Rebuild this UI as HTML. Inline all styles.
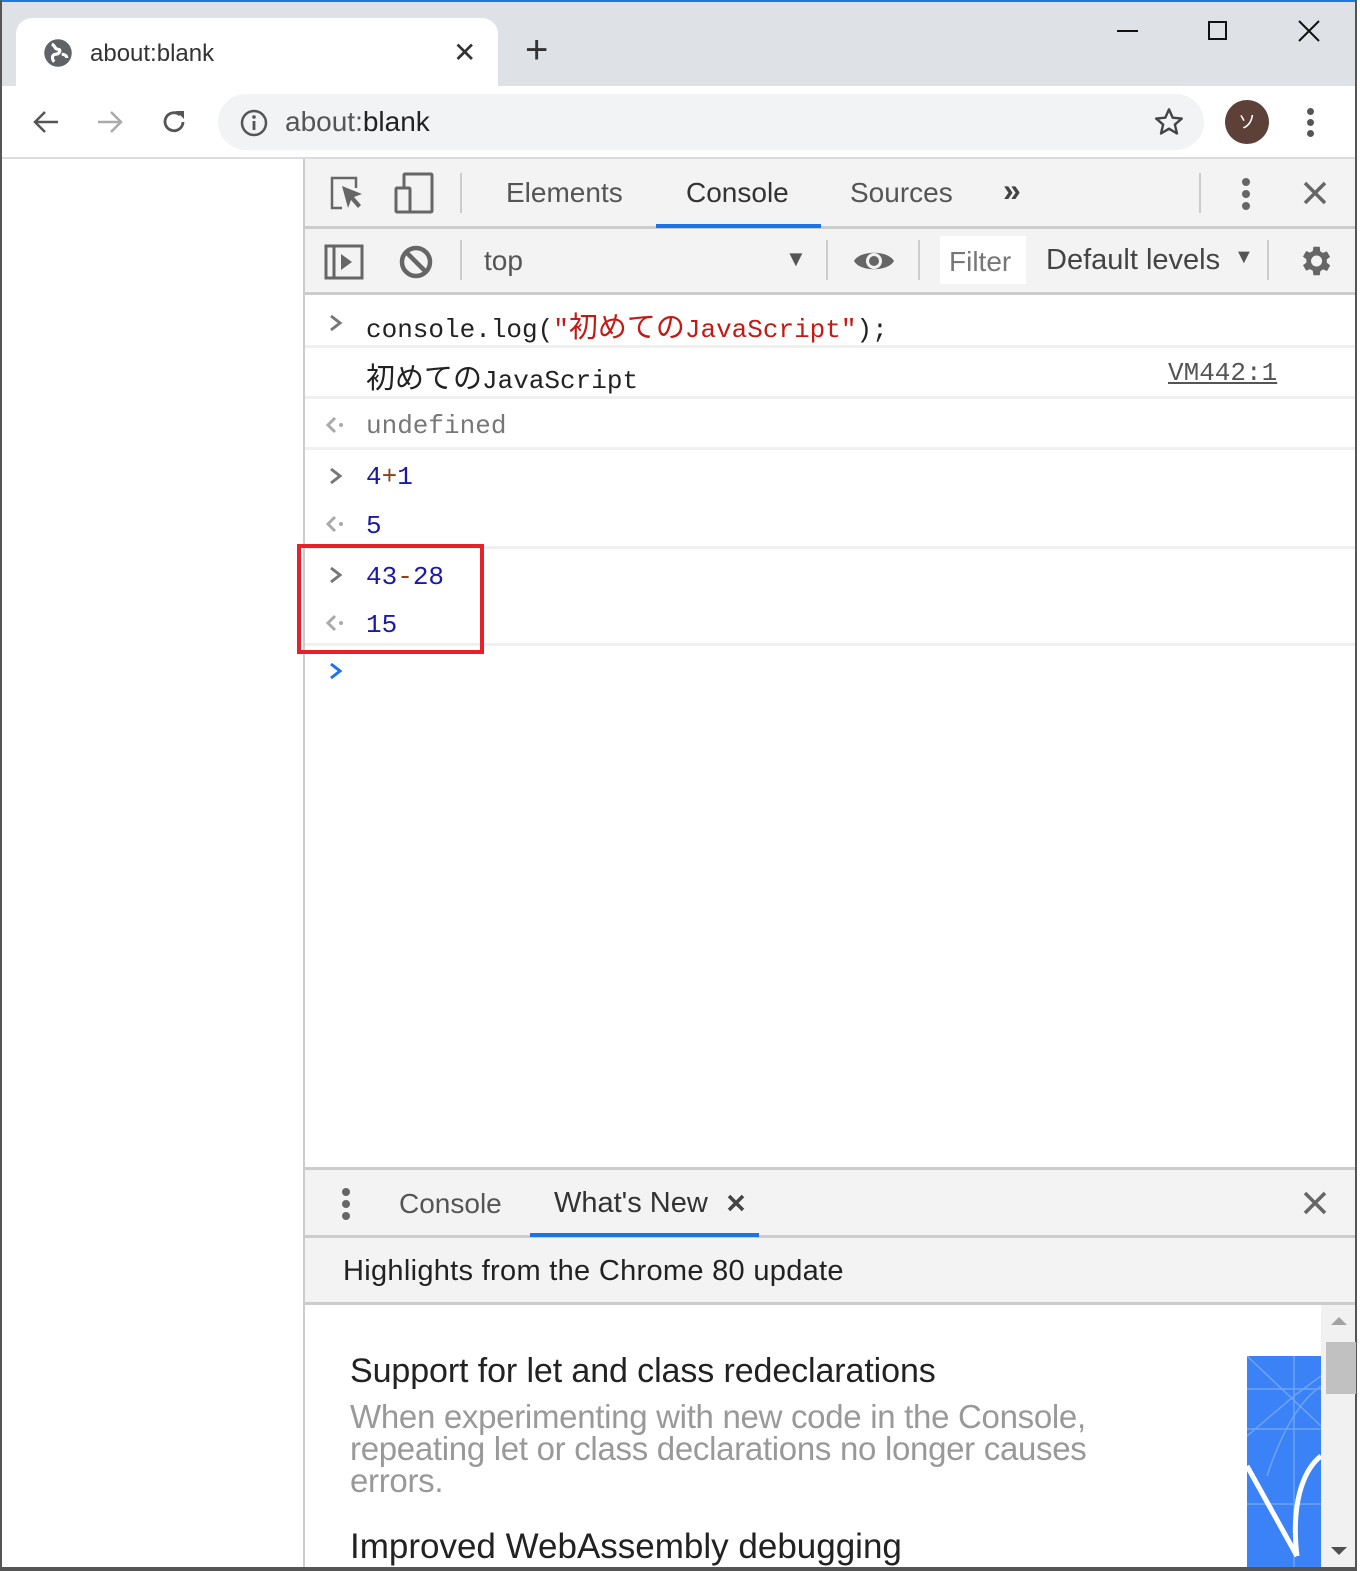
<!DOCTYPE html>
<html><head><meta charset="utf-8"><style>
*{margin:0;padding:0;box-sizing:border-box}
body{width:1360px;height:1571px;position:relative;overflow:hidden;background:#fff;font-family:"Liberation Sans","Noto Sans CJK JP",sans-serif;color:#333}
.a{position:absolute;white-space:nowrap}
.mono{font-family:"Liberation Mono","Noto Sans CJK JP",monospace;font-size:26px}
.jp{font-size:29px}
.ui{font-size:28px;color:#333}
</style></head><body>
<div class="a" style="left:0;top:0;width:1360px;height:2px;background:#1e7ad6"></div>
<div class="a" style="left:0;top:2px;width:1360px;height:84px;background:#dee1e6"></div>
<div class="a" style="left:0;top:0;width:2px;height:1571px;background:#555"></div>
<div class="a" style="left:1355px;top:0;width:2px;height:1571px;background:#555"></div>
<div class="a" style="left:1357px;top:0;width:3px;height:1571px;background:#fff"></div>
<div class="a" style="left:16px;top:18px;width:482px;height:72px;background:#fff;border-radius:16px 16px 0 0"></div>
<svg class="a" style="left:43px;top:38px" width="30" height="30" viewBox="0 0 24 24"><circle cx="12" cy="12" r="11" fill="#5f6368"/><path d="M7 5c3 1 2 4 5 4s1 4-2 4-3 4-1 6M15 13c2 0 4 1 4 3" stroke="#fff" stroke-width="2.5" fill="none"/></svg>
<div class="a" style="left:90px;top:40px;font-size:24px;color:#333">about:blank</div>
<div class="a" style="left:453px;top:36px;font-size:28px;color:#333">✕</div>
<div class="a" style="left:525px;top:30px;font-size:40px;color:#333;line-height:1">+</div>
<div class="a" style="left:1117px;top:30px;width:21px;height:2px;background:#111"></div>
<div class="a" style="left:1208px;top:21px;width:19px;height:19px;border:2px solid #111"></div>
<svg class="a" style="left:1297px;top:19px" width="24" height="24"><path d="M2 2L22 22M22 2L2 22" stroke="#111" stroke-width="2"/></svg>
<div class="a" style="left:2px;top:86px;width:1353px;height:72px;background:#fff"></div>
<svg class="a" style="left:30px;top:106px" width="32" height="32" viewBox="0 0 32 32"><path d="M28 16H5M15 6L5 16l10 10" stroke="#555" stroke-width="2.5" fill="none"/></svg>
<svg class="a" style="left:94px;top:106px" width="32" height="32" viewBox="0 0 32 32"><path d="M4 16h23M17 6l10 10-10 10" stroke="#aaa" stroke-width="2.5" fill="none"/></svg>
<svg class="a" style="left:158px;top:106px" width="32" height="32" viewBox="0 0 32 32"><path d="M25 16a9 9 0 1 1-3-7" stroke="#555" stroke-width="2.8" fill="none"/><path d="M18 5h8v8z" fill="#555"/></svg>
<div class="a" style="left:218px;top:94px;width:986px;height:56px;background:#f1f3f4;border-radius:28px"></div>
<svg class="a" style="left:239px;top:108px" width="30" height="30" viewBox="0 0 30 30"><circle cx="15" cy="15" r="12" stroke="#555" stroke-width="2.5" fill="none"/><path d="M15 13v9" stroke="#555" stroke-width="2.8"/><circle cx="15" cy="9" r="1.8" fill="#555"/></svg>
<div class="a" style="left:285px;top:106px;font-size:28px;color:#555">about:<span style="color:#222">blank</span></div>
<svg class="a" style="left:1153px;top:106px" width="32" height="32" viewBox="0 0 24 24"><path d="M12 2.5l2.8 6.3 6.8.6-5.2 4.5 1.6 6.7L12 17l-6 3.6 1.6-6.7L2.4 9.4l6.8-.6z" stroke="#444" stroke-width="1.8" fill="none" stroke-linejoin="round"/></svg>
<div class="a" style="left:1225px;top:100px;width:44px;height:44px;border-radius:50%;background:#5d4037;color:#fff;font-size:18px;text-align:center;line-height:44px">ソ</div>
<div class="a" style="left:1307px;top:108px;width:7px;height:7px;border-radius:50%;background:#555"></div>
<div class="a" style="left:1307px;top:119px;width:7px;height:7px;border-radius:50%;background:#555"></div>
<div class="a" style="left:1307px;top:130px;width:7px;height:7px;border-radius:50%;background:#555"></div>
<div class="a" style="left:2px;top:157px;width:1353px;height:2px;background:#dadce0"></div>
<div class="a" style="left:303px;top:159px;width:2px;height:1412px;background:#ccc"></div>
<div class="a" style="left:305px;top:159px;width:1050px;height:68px;background:#f3f3f3"></div>
<div class="a" style="left:305px;top:226px;width:1050px;height:3px;background:#ccc"></div>
<svg class="a" style="left:328px;top:172px" width="40" height="42" viewBox="0 0 40 42"><path d="M14 36H4V6h24v10" stroke="#666" stroke-width="2.5" fill="none"/><path d="M14 14l20 8-8 3 7 8-3 3-7-8-3 8z" fill="#666"/></svg>
<svg class="a" style="left:393px;top:172px" width="42" height="42" viewBox="0 0 42 42"><rect x="11" y="2" width="28" height="38" rx="1" stroke="#666" stroke-width="3" fill="none"/><rect x="3" y="16" width="14" height="24" rx="1" stroke="#666" stroke-width="3" fill="#f3f3f3"/></svg>
<div class="a" style="left:460px;top:173px;width:2px;height:40px;background:#ccc"></div>
<div class="a ui" style="left:506px;top:177px;color:#555">Elements</div>
<div class="a ui" style="left:686px;top:177px">Console</div>
<div class="a" style="left:656px;top:224px;width:165px;height:4px;background:#1a73e8"></div>
<div class="a ui" style="left:850px;top:177px;color:#555">Sources</div>
<div class="a" style="left:1003px;top:172px;font-size:32px;color:#444;font-weight:bold">»</div>
<div class="a" style="left:1199px;top:173px;width:2px;height:40px;background:#ccc"></div>
<div class="a" style="left:1242px;top:178px;width:8px;height:8px;border-radius:50%;background:#666"></div>
<div class="a" style="left:1242px;top:190px;width:8px;height:8px;border-radius:50%;background:#666"></div>
<div class="a" style="left:1242px;top:202px;width:8px;height:8px;border-radius:50%;background:#666"></div>
<svg class="a" style="left:1302px;top:180px" width="26" height="26"><path d="M3 3L23 23M23 3L3 23" stroke="#666" stroke-width="3.5"/></svg>
<div class="a" style="left:305px;top:229px;width:1050px;height:63px;background:#f3f3f3"></div>
<div class="a" style="left:305px;top:292px;width:1050px;height:3px;background:#ccc"></div>
<svg class="a" style="left:324px;top:244px" width="42" height="36"><rect x="2" y="2" width="36" height="32" stroke="#666" stroke-width="3" fill="none"/><path d="M10 2v32" stroke="#666" stroke-width="3"/><path d="M17 10l11 8-11 8z" fill="#666"/></svg>
<svg class="a" style="left:398px;top:244px" width="36" height="36"><circle cx="18" cy="18" r="14" stroke="#666" stroke-width="4.5" fill="none"/><path d="M8 8L28 28" stroke="#666" stroke-width="4.5"/></svg>
<div class="a" style="left:460px;top:240px;width:2px;height:40px;background:#ccc"></div>
<div class="a ui" style="left:484px;top:245px;color:#555">top</div>
<div class="a" style="left:785px;top:246px;font-size:22px;color:#555">▼</div>
<div class="a" style="left:826px;top:240px;width:2px;height:40px;background:#ccc"></div>
<svg class="a" style="left:852px;top:246px" width="44" height="30" viewBox="0 0 44 30"><path d="M2 15C8 4 36 4 42 15C36 26 8 26 2 15z" fill="#666"/><circle cx="22" cy="15" r="8" fill="#f3f3f3"/><circle cx="22" cy="15" r="5" fill="#666"/></svg>
<div class="a" style="left:918px;top:240px;width:2px;height:40px;background:#ccc"></div>
<div class="a" style="left:940px;top:236px;width:86px;height:48px;background:#fff"></div>
<div class="a ui" style="left:949px;top:246px;color:#777">Filter</div>
<div class="a" style="left:1046px;top:244px;font-size:29px;color:#444">Default levels</div>
<div class="a" style="left:1234px;top:246px;font-size:20px;color:#555">▼</div>
<div class="a" style="left:1267px;top:240px;width:2px;height:40px;background:#ccc"></div>
<svg class="a" style="left:1296px;top:242px" width="38" height="38" viewBox="0 0 24 24"><path fill="#666" d="M19.4 13a7.5 7.5 0 0 0 0-2l2.1-1.6-2-3.5-2.5 1a7 7 0 0 0-1.7-1L15 3h-4l-.4 2.7a7 7 0 0 0-1.7 1l-2.5-1-2 3.5L6.6 11a7.5 7.5 0 0 0 0 2l-2.2 1.6 2 3.5 2.5-1a7 7 0 0 0 1.7 1L11 21h4l.4-2.7a7 7 0 0 0 1.7-1l2.5 1 2-3.5zM13 15.5a3.5 3.5 0 1 1 0-7 3.5 3.5 0 0 1 0 7z"/></svg>
<div class="a" style="left:305px;top:345px;width:1050px;height:3px;background:#f0f0f0"></div>
<div class="a" style="left:305px;top:396px;width:1050px;height:3px;background:#f0f0f0"></div>
<div class="a" style="left:305px;top:447px;width:1050px;height:3px;background:#f0f0f0"></div>
<div class="a" style="left:305px;top:546px;width:1050px;height:3px;background:#f0f0f0"></div>
<div class="a" style="left:305px;top:643px;width:1050px;height:3px;background:#f0f0f0"></div>
<svg class="a" style="left:328px;top:313px" width="16" height="20"><path d="M3 3l9 7-9 7" stroke="#777" stroke-width="3" fill="none"/></svg>
<div class="a mono" style="left:366px;top:304px;color:#222">console.log(<span style="color:#c41a16">"<span class="jp">初めての</span>JavaScript"</span>);</div>
<div class="a mono" style="left:366px;top:355px;color:#222"><span class="jp">初めての</span>JavaScript</div>
<div class="a mono" style="left:1168px;top:358px;color:#555;text-decoration:underline">VM442:1</div>
<svg class="a" style="left:325px;top:415px" width="22" height="20"><path d="M10 3L3 10l7 7" stroke="#aaa" stroke-width="3" fill="none"/><circle cx="16" cy="10" r="2" fill="#aaa"/></svg>
<div class="a mono" style="left:366px;top:411px;color:#777">undefined</div>
<svg class="a" style="left:328px;top:466px" width="16" height="20"><path d="M3 3l9 7-9 7" stroke="#777" stroke-width="3" fill="none"/></svg>
<div class="a mono" style="left:366px;top:462px;color:#1a1aa6">4<span style="color:#8b4513">+</span>1</div>
<svg class="a" style="left:325px;top:514px" width="22" height="20"><path d="M10 3L3 10l7 7" stroke="#aaa" stroke-width="3" fill="none"/><circle cx="16" cy="10" r="2" fill="#aaa"/></svg>
<div class="a mono" style="left:366px;top:511px;color:#1a1aa6">5</div>
<svg class="a" style="left:328px;top:565px" width="16" height="20"><path d="M3 3l9 7-9 7" stroke="#777" stroke-width="3" fill="none"/></svg>
<div class="a mono" style="left:366px;top:562px;color:#1a1aa6">43<span style="color:#8b4513">-</span>28</div>
<svg class="a" style="left:325px;top:613px" width="22" height="20"><path d="M10 3L3 10l7 7" stroke="#aaa" stroke-width="3" fill="none"/><circle cx="16" cy="10" r="2" fill="#aaa"/></svg>
<div class="a mono" style="left:366px;top:610px;color:#1a1aa6">15</div>
<div class="a" style="left:297px;top:544px;width:187px;height:110px;border:4px solid #e8202a"></div>
<svg class="a" style="left:328px;top:661px" width="16" height="20"><path d="M3 3l9 7-9 7" stroke="#1a73e8" stroke-width="3" fill="none"/></svg>
<div class="a" style="left:305px;top:1167px;width:1050px;height:3px;background:#ccc"></div>
<div class="a" style="left:305px;top:1170px;width:1050px;height:65px;background:#f3f3f3"></div>
<div class="a" style="left:305px;top:1235px;width:1050px;height:3px;background:#ccc"></div>
<div class="a" style="left:342px;top:1188px;width:8px;height:8px;border-radius:50%;background:#666"></div>
<div class="a" style="left:342px;top:1200px;width:8px;height:8px;border-radius:50%;background:#666"></div>
<div class="a" style="left:342px;top:1212px;width:8px;height:8px;border-radius:50%;background:#666"></div>
<div class="a ui" style="left:399px;top:1188px;color:#555">Console</div>
<div class="a" style="left:554px;top:1187px;font-size:29px;color:#333">What's New</div>
<svg class="a" style="left:727px;top:1194px" width="18" height="18"><path d="M2 2L16 16M16 2L2 16" stroke="#444" stroke-width="3.5"/></svg>
<div class="a" style="left:530px;top:1233px;width:229px;height:4px;background:#1a73e8"></div>
<svg class="a" style="left:1302px;top:1190px" width="26" height="26"><path d="M3 3L23 23M23 3L3 23" stroke="#666" stroke-width="3.5"/></svg>
<div class="a" style="left:305px;top:1238px;width:1050px;height:64px;background:#f3f3f3"></div>
<div class="a" style="left:305px;top:1302px;width:1050px;height:3px;background:#ccc"></div>
<div class="a" style="left:343px;top:1255px;font-size:29px;color:#222;letter-spacing:0.3px">Highlights from the Chrome 80 update</div>
<div class="a" style="left:350px;top:1352px;font-size:34px;color:#222;letter-spacing:-0.1px">Support for let and class redeclarations</div>
<div class="a" style="left:350px;top:1401px;font-size:33px;color:#999;line-height:32px;white-space:normal;width:760px;letter-spacing:-0.3px">When experimenting with new code in the Console, repeating let or class declarations no longer causes errors.</div>
<div class="a" style="left:350px;top:1527px;font-size:35px;color:#222;letter-spacing:0px">Improved WebAssembly debugging</div>
<svg class="a" style="left:1247px;top:1356px" width="74" height="215" viewBox="0 0 74 215"><rect width="74" height="215" fill="#3b82f6"/><path d="M0 33H74M0 73H74M0 148H74M47 0V215M0 0L74 70M0 80L47 40 74 20" stroke="#6ea3f8" stroke-width="1.5" fill="none"/><path d="M20 120C40 60 60 40 74 30" stroke="#6ea3f8" stroke-width="1.5" fill="none"/><path d="M0 110L50 200M50 200C44 150 55 115 74 100" stroke="#fff" stroke-width="5" fill="none"/></svg>
<div class="a" style="left:1321px;top:1305px;width:34px;height:266px;background:#f1f1f1"></div>
<div class="a" style="left:1326px;top:1342px;width:30px;height:52px;background:#c1c1c1"></div>
<div class="a" style="left:1331px;top:1317px;width:0;height:0;border-left:8px solid transparent;border-right:8px solid transparent;border-bottom:8px solid #a3a3a3"></div>
<div class="a" style="left:1331px;top:1547px;width:0;height:0;border-left:8px solid transparent;border-right:8px solid transparent;border-top:8px solid #505050"></div>
<div class="a" style="left:0;top:1567px;width:1357px;height:4px;background:#555"></div>
</body></html>
